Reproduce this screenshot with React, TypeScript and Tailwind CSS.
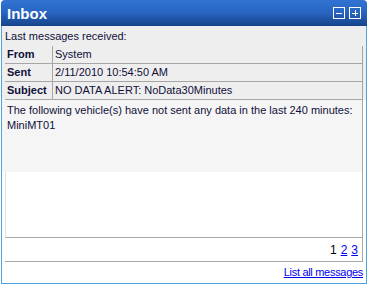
export default function App() {
  const rows = [
    { label: "From", value: "System" },
    { label: "Sent", value: "2/11/2010 10:54:50 AM" },
    { label: "Subject", value: "NO DATA ALERT: NoData30Minutes" },
  ];

  return (
    <div className="w-[368px] h-[285px] bg-white font-['Liberation_Sans',Arial,sans-serif] text-[11px] text-[#10103a]">
      <div className="ml-px w-[366px] flex flex-col">
        {/* title bar */}
        <div className="h-[26px] rounded-t-[4px] bg-gradient-to-b from-[#3273d2] via-[#2864c0] to-[#16448a] flex items-center justify-between pl-[6px] pr-[6px]">
          <span className="text-white font-bold text-[15px] leading-none">Inbox</span>
          <div className="flex gap-[4px]">
            <span className="w-[12px] h-[12px] border border-white flex items-center justify-center">
              <span className="block w-[6px] h-px bg-white" />
            </span>
            <span className="w-[12px] h-[12px] border border-white relative flex items-center justify-center">
              <span className="block w-[6px] h-px bg-white" />
              <span className="absolute block w-px h-[6px] bg-white" />
            </span>
          </div>
        </div>

        <div className="border-x border-b border-[#4ba6df] h-[258px] flex flex-col bg-white">
          <div className="bg-[#eeeeee] h-[20px] flex items-center pl-[3px]">Last messages received:</div>

          <div className="bg-[#eeeeee] pl-[3px] pr-[3px]">
            {rows.map((r) => (
              <div key={r.label} className="flex h-[18px] border-b border-[#a6a6a6] border-r">
                <div className="w-[48px] border-r border-[#a6a6a6] font-bold pl-[2px] flex items-center">{r.label}</div>
                <div className="flex-1 pl-[2px] flex items-center">{r.value}</div>
              </div>
            ))}
          </div>

          <div className="pr-[3px] flex flex-col flex-1">
            <div className="bg-[#f5f5f5] h-[72px] border-r border-[#a6a6a6] pl-[5px] pt-[3px] leading-[15px]">
              <div>The following vehicle(s) have not sent any data in the last 240 minutes:</div>
              <div>MiniMT01</div>
            </div>
            <div className="ml-[3px] h-[66px] border-l border-l-[#e2e2e2] border-r border-r-[#a6a6a6] border-b border-b-[#a6a6a6]" />
            <div className="ml-[3px] h-[24px] border-r border-[#a6a6a6] border-b flex items-center justify-end pr-[4px] gap-[4px] text-[12px]">
              <span className="text-black">1</span>
              <a className="text-[#0000ee] underline">2</a>
              <a className="text-[#0000ee] underline">3</a>
            </div>
            <div className="flex-1 flex items-center justify-end">
              <a className="text-[#0000ee] underline text-[11px] tracking-[-0.3px]">List all messages</a>
            </div>
          </div>
        </div>
      </div>
    </div>
  );
}
